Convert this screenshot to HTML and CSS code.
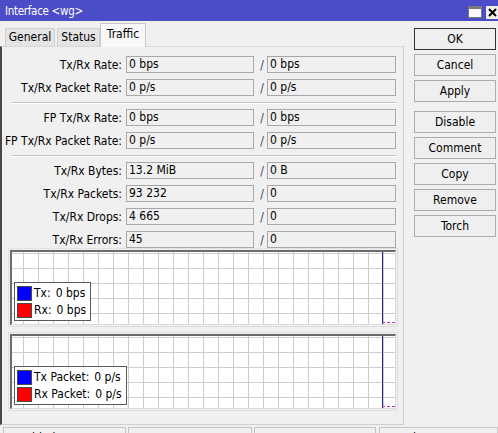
FILE: index.html
```html
<!DOCTYPE html>
<html lang="en">
<head>
    <meta charset="UTF-8">
    <title>Interface &lt;wg&gt;</title>
    <link rel="stylesheet" href="styles.css">
</head>
<body>
    <div class="window">
        <div class="titlebar">
            <span class="title">Interface &lt;wg&gt;</span>
            <div class="title-btns">
                <span class="tb-btn tb-max"></span>
                <span class="tb-btn tb-close">
                    <svg width="9" height="9" viewBox="0 0 9 9"><path d="M1 1 L8 8 M8 1 L1 8" stroke="#000" stroke-width="2"/></svg>
                </span>
            </div>
        </div>

        <div class="content">
            <div class="left">
                <div class="tabs">
                    <div class="tab tab-general">General</div>
                    <div class="tab tab-status">Status</div>
                    <div class="tab tab-traffic active">Traffic</div>
                </div>

                <div class="panel">
                    <div class="row">
                        <span class="label">Tx/Rx Rate:</span>
                        <span class="field">0 bps</span>
                        <span class="slash">/</span>
                        <span class="field">0 bps</span>
                    </div>
                    <div class="row">
                        <span class="label">Tx/Rx Packet Rate:</span>
                        <span class="field">0 p/s</span>
                        <span class="slash">/</span>
                        <span class="field">0 p/s</span>
                    </div>
                    <div class="sep"></div>
                    <div class="row">
                        <span class="label">FP Tx/Rx Rate:</span>
                        <span class="field">0 bps</span>
                        <span class="slash">/</span>
                        <span class="field">0 bps</span>
                    </div>
                    <div class="row">
                        <span class="label">FP Tx/Rx Packet Rate:</span>
                        <span class="field">0 p/s</span>
                        <span class="slash">/</span>
                        <span class="field">0 p/s</span>
                    </div>
                    <div class="sep"></div>
                    <div class="row">
                        <span class="label">Tx/Rx Bytes:</span>
                        <span class="field">13.2 MiB</span>
                        <span class="slash">/</span>
                        <span class="field">0 B</span>
                    </div>
                    <div class="row">
                        <span class="label">Tx/Rx Packets:</span>
                        <span class="field">93 232</span>
                        <span class="slash">/</span>
                        <span class="field">0</span>
                    </div>
                    <div class="row">
                        <span class="label">Tx/Rx Drops:</span>
                        <span class="field">4 665</span>
                        <span class="slash">/</span>
                        <span class="field">0</span>
                    </div>
                    <div class="row last">
                        <span class="label">Tx/Rx Errors:</span>
                        <span class="field">45</span>
                        <span class="slash">/</span>
                        <span class="field">0</span>
                    </div>

                    <div class="graph">
                        <div class="plot">
                            <div class="now-line"></div>
                            <div class="rx-line"></div>
                            <div class="legend">
                                <div class="legend-row">
                                    <span class="swatch tx"></span>
                                    <span class="legend-name">Tx:</span>
                                    <span class="legend-val">0 bps</span>
                                </div>
                                <div class="legend-row">
                                    <span class="swatch rx"></span>
                                    <span class="legend-name">Rx:</span>
                                    <span class="legend-val">0 bps</span>
                                </div>
                            </div>
                        </div>
                    </div>

                    <div class="graph second">
                        <div class="plot">
                            <div class="now-line"></div>
                            <div class="rx-line"></div>
                            <div class="legend">
                                <div class="legend-row">
                                    <span class="swatch tx"></span>
                                    <span class="legend-name">Tx Packet:</span>
                                    <span class="legend-val">0 p/s</span>
                                </div>
                                <div class="legend-row">
                                    <span class="swatch rx"></span>
                                    <span class="legend-name">Rx Packet:</span>
                                    <span class="legend-val">0 p/s</span>
                                </div>
                            </div>
                        </div>
                    </div>
                </div>
            </div>

            <div class="buttons">
                <button class="btn default">OK</button>
                <button class="btn">Cancel</button>
                <button class="btn">Apply</button>
                <button class="btn group">Disable</button>
                <button class="btn">Comment</button>
                <button class="btn">Copy</button>
                <button class="btn">Remove</button>
                <button class="btn">Torch</button>
            </div>
        </div>

        <div class="statusbar">
            <div class="status-cell s1">enabled</div>
            <div class="status-cell s2"></div>
            <div class="status-cell s3"></div>
            <div class="status-cell s4">running</div>
        </div>
    </div>
</body>
</html>
```

FILE: styles.css
```css
* {
    box-sizing: border-box;
}

body {
    margin: 0;
    background: #f0f0f0;
    color: #000;
    font-family: "DejaVu Sans Condensed", "DejaVu Sans", sans-serif;
    font-stretch: condensed;
    font-size: 12px;
}

.window {
    width: 498px;
    height: 433px;
    overflow: hidden;
}

/* title bar */
.titlebar {
    height: 21px;
    background: #4b4cc8;
    display: flex;
    align-items: center;
    justify-content: space-between;
    padding-left: 5px;
}

.title {
    color: #fff;
    font-size: 11.5px;
    letter-spacing: -0.3px;
}

.title-btns {
    display: flex;
    align-items: center;
    gap: 4px;
    margin-top: 3px;
}

.tb-btn {
    display: flex;
    align-items: center;
    justify-content: center;
    height: 12px;
    background: #f0f0f0;
}

.tb-max {
    width: 14px;
    border: 1px solid #7a7a7a;
    background: #fafafa;
    box-shadow: inset 0 2px 0 #7a7a7a;
}

.tb-close {
    width: 12px;
    height: 13px;
}

/* layout */
.content {
    display: flex;
}

.left {
    width: 404px;
}

.tabs {
    height: 25px;
    display: flex;
    align-items: flex-end;
    padding-left: 5px;
}

.tab {
    height: 18px;
    line-height: 17px;
    text-align: center;
    background: #e4e4e4;
    border: 1px solid #d2d2d2;
    border-bottom: none;
}

.tab-general {
    width: 50px;
}

.tab-status {
    width: 43px;
    margin-left: 2px;
}

.tab-traffic {
    width: 46px;
}

.tab.active {
    height: 24px;
    line-height: 20px;
    background: #f8f8f8;
    border-color: #c8c8c8;
    margin-bottom: -1px;
    position: relative;
}

.panel {
    height: 379px;
    border-left: 2px solid #474747;
    border-top: 1px solid #d8d8d8;
    border-right: 1px solid #cfcfcf;
    border-bottom: 1px solid #cfcfcf;
    padding-top: 9px;
}

/* fields */
.row {
    display: grid;
    grid-template-columns: 124px 128px 13px 129px;
    align-items: center;
    height: 17px;
    margin-bottom: 6px;
}

.row.last {
    margin-bottom: 0;
}

.label {
    text-align: right;
    padding-right: 4px;
    white-space: nowrap;
}

.field {
    height: 17px;
    line-height: 15px;
    padding-left: 2px;
    border: 1px solid #a8a8a8;
    background: #f0f0f0;
    white-space: nowrap;
}

.slash {
    text-align: center;
    padding-left: 3px;
    color: #444;
}

.sep {
    height: 2px;
    border-top: 1px solid #c4c4c4;
    border-bottom: 1px solid #fff;
    margin: 1px 7px 5px 10px;
}

/* graphs */
.graph {
    margin: 0 5px 0 6px;
    border: 1px solid #e0e0e0;
    padding: 1px;
}

.graph.second {
    margin-top: 5px;
}

.plot {
    position: relative;
    height: 75px;
    border-top: 2px solid #6b6b6b;
    border-left: 2px solid #6b6b6b;
    border-right: 1px solid #dadada;
    border-bottom: 1px solid #dadada;
    background-color: #fff;
    background-image:
        linear-gradient(90deg, #cdcdcd 1px, transparent 1px),
        linear-gradient(#cdcdcd 1px, transparent 1px);
    background-size: 15px 15px;
    background-position: 11px 1px;
}

.now-line {
    position: absolute;
    left: 370px;
    top: 0;
    bottom: 0;
    width: 1px;
    background: #22228c;
}

.rx-line {
    position: absolute;
    left: 370px;
    right: 0;
    bottom: 1px;
    border-bottom: 1px dashed #c02cb8;
}

.legend {
    position: absolute;
    left: 2px;
    bottom: 3px;
    background: #fff;
    border: 1px solid #595959;
    padding: 2px 4px 1px 2px;
}

.legend-row {
    display: flex;
    align-items: center;
    height: 16px;
    margin-bottom: 1px;
}

.swatch {
    width: 15px;
    height: 15px;
    border: 1px solid #4a4a4a;
    margin-right: 2px;
}

.swatch.tx {
    background: #0000ff;
}

.swatch.rx {
    background: #ff0000;
}

.legend-val {
    margin-left: 5px;
}

/* buttons */
.buttons {
    margin-left: 10px;
    padding-top: 7px;
    display: flex;
    flex-direction: column;
    gap: 4px;
}

.btn {
    width: 82px;
    height: 22px;
    padding: 0;
    font: inherit;
    color: #000;
    background: #efefef;
    border: 1px solid #acacac;
}

.btn.default {
    border-color: #333;
}

.btn.group {
    margin-top: 5px;
}

/* status bar */
.statusbar {
    display: flex;
    gap: 2px;
    padding-left: 3px;
    margin-top: 2px;
}

.status-cell {
    height: 20px;
    border: 1px solid #c6c6c6;
    padding: 3px 8px;
    white-space: nowrap;
}

.s1 { width: 123px; }
.s2 { width: 124px; }
.s3 { width: 122px; }
.s4 { flex: 1; margin-left: 1px; }
```
